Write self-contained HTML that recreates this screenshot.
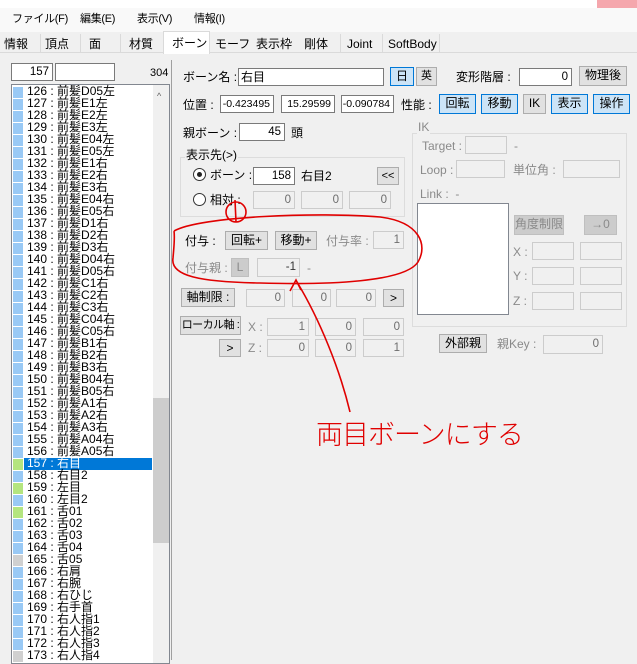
<!DOCTYPE html>
<html><head><meta charset="utf-8"><style>
*{margin:0;padding:0;box-sizing:border-box}
body{width:637px;height:659px;overflow:hidden;background:#f0f0f0;position:relative;font-family:"Liberation Sans","Noto Sans CJK JP",sans-serif;font-size:12px;color:#000}
.a{position:absolute;white-space:nowrap;line-height:14px}
.in{position:absolute;background:#fff;border:1px solid #7a7a7a;text-align:right;padding-right:3px;line-height:16px;font-size:11.5px;white-space:nowrap;overflow:hidden}
.dis{background:#f0f0f0;border-color:#ccc;color:#6d6d6d}
.bt{position:absolute;background:#e1e1e1;border:1px solid #adadad;text-align:center;line-height:17px;white-space:nowrap;overflow:hidden}
.bl{background:#cce4f7;border-color:#0078d7}
.bd{background:#ccc;border-color:#bfbfbf;color:#8a8a8a}
.g{color:#8a8a8a}
.m{font-size:11px;letter-spacing:-0.3px}
.row{position:absolute;left:13px;height:12px;line-height:12px;font-size:12px;width:140px}
.sw{position:absolute;left:0;top:1px;width:10px;height:11px;background:#99c9f5}
.tx{position:absolute;left:14px;top:-1px;white-space:nowrap}
</style></head><body>
<div style="position:absolute;left:0;top:0;width:637px;height:8px;background:#fff"></div>
<div style="position:absolute;left:597px;top:0;width:40px;height:8px;background:#f5a7ad"></div>
<div style="position:absolute;left:0;top:8px;width:637px;height:24px;background:#f9f9f9"></div>
<div class="a m" style="left:12px;top:12px">ファイル(F)</div>
<div class="a m" style="left:80px;top:12px">編集(E)</div>
<div class="a m" style="left:137px;top:12px">表示(V)</div>
<div class="a m" style="left:194px;top:12px">情報(I)</div>
<div style="position:absolute;left:0;top:33px;width:637px;height:20px;background:#f0f0f0;border-bottom:1px solid #dadada"></div>
<div style="position:absolute;left:163px;top:31px;width:47px;height:23px;background:#fff;border:1px solid #dadada;border-bottom:none"></div>
<div class="a" style="left:4px;top:37px">情報</div><div class="a" style="left:45px;top:37px">頂点</div><div class="a" style="left:89px;top:37px">面</div><div class="a" style="left:129px;top:37px">材質</div><div class="a" style="left:172px;top:36px">ボーン</div><div class="a" style="left:215px;top:37px">モーフ</div><div class="a" style="left:256px;top:37px">表示枠</div><div class="a" style="left:304px;top:37px">剛体</div><div class="a" style="left:347px;top:37px">Joint</div><div class="a" style="left:388px;top:37px">SoftBody</div>
<div style="position:absolute;left:40px;top:34px;height:19px;border-left:1px solid #dadada"></div>
<div style="position:absolute;left:80px;top:34px;height:19px;border-left:1px solid #dadada"></div>
<div style="position:absolute;left:120px;top:34px;height:19px;border-left:1px solid #dadada"></div>
<div style="position:absolute;left:340px;top:34px;height:19px;border-left:1px solid #dadada"></div>
<div style="position:absolute;left:382px;top:34px;height:19px;border-left:1px solid #dadada"></div>
<div style="position:absolute;left:439px;top:34px;height:19px;border-left:1px solid #dadada"></div>
<div style="position:absolute;left:171px;top:60px;height:600px;border-left:1px solid #a0a0a0"></div>

<div class="in" style="left:11px;top:63px;width:42px;height:18px">157</div>
<div class="in" style="left:55px;top:63px;width:60px;height:18px"></div>
<div class="a" style="left:150px;top:66px;font-size:11px">304</div>
<div style="position:absolute;left:11px;top:84px;width:159px;height:580px;background:#fff;border:1px solid #828790;overflow:hidden">
<div style="position:absolute;left:141px;top:0;width:17px;height:580px;background:#f0f0f0"></div>
<div style="position:absolute;left:141px;top:313px;width:17px;height:145px;background:#cdcdcd"></div>
<div style="position:absolute;left:145px;top:6px;font-size:9px;color:#606060">^</div>
</div>
<div id="rows"></div>

<div class="a" style="left:183px;top:70px">ボーン名 :</div>
<div class="in" style="left:238px;top:68px;width:146px;height:18px;text-align:left;padding-left:2px;font-size:12px">右目</div>
<div class="bt bl" style="left:390px;top:67px;width:24px;height:19px">日</div>
<div class="bt" style="left:416px;top:67px;width:21px;height:19px;font-size:11px">英</div>
<div class="a" style="left:456px;top:70px">変形階層 :</div>
<div class="in" style="left:519px;top:68px;width:53px;height:18px">0</div>
<div class="bt" style="left:579px;top:66px;width:48px;height:20px">物理後</div>

<div class="a" style="left:183px;top:98px">位置 :</div>
<div class="in" style="left:220px;top:95px;width:54px;height:18px;font-size:10.5px">-0.423495</div>
<div class="in" style="left:281px;top:95px;width:54px;height:18px;font-size:10.5px">15.29599</div>
<div class="in" style="left:341px;top:95px;width:53px;height:18px;font-size:10.5px">-0.090784</div>
<div class="a" style="left:401px;top:98px">性能 :</div>
<div class="bt bl" style="left:439px;top:94px;width:37px;height:20px">回転</div>
<div class="bt bl" style="left:481px;top:94px;width:37px;height:20px">移動</div>
<div class="bt" style="left:523px;top:94px;width:23px;height:20px">IK</div>
<div class="bt bl" style="left:551px;top:94px;width:37px;height:20px">表示</div>
<div class="bt bl" style="left:593px;top:94px;width:37px;height:20px">操作</div>

<div class="a" style="left:183px;top:126px">親ボーン :</div>
<div class="in" style="left:239px;top:123px;width:46px;height:18px">45</div>
<div class="a" style="left:291px;top:126px">頭</div>

<div style="position:absolute;left:180px;top:157px;width:225px;height:60px;border:1px solid #dcdcdc"></div>
<div class="a" style="left:185px;top:148px;background:#f0f0f0;padding:0 1px">表示先(&gt;)</div>
<div style="position:absolute;left:193px;top:168px;width:13px;height:13px;border:1px solid #333;border-radius:50%;background:#fff"><div style="position:absolute;left:3px;top:3px;width:5px;height:5px;border-radius:50%;background:#222"></div></div>
<div class="a" style="left:210px;top:168px">ボーン :</div>
<div class="in" style="left:253px;top:167px;width:42px;height:18px">158</div>
<div class="a" style="left:301px;top:169px">右目2</div>
<div class="bt" style="left:377px;top:167px;width:22px;height:18px;font-size:11px">&lt;&lt;</div>
<div style="position:absolute;left:193px;top:193px;width:13px;height:13px;border:1px solid #333;border-radius:50%;background:#fff"></div>
<div class="a" style="left:210px;top:193px">相対 :</div>
<div class="in dis" style="left:253px;top:191px;width:42px;height:18px">0</div>
<div class="in dis" style="left:301px;top:191px;width:42px;height:18px">0</div>
<div class="in dis" style="left:349px;top:191px;width:42px;height:18px">0</div>

<div style="position:absolute;left:412px;top:133px;width:215px;height:194px;border:1px solid #dcdcdc"></div>
<div class="a g" style="left:417px;top:120px;background:#f0f0f0;padding:0 1px">IK</div>
<div class="a g" style="left:422px;top:139px">Target :</div>
<div class="in dis" style="left:465px;top:136px;width:42px;height:18px"></div>
<div class="a g" style="left:514px;top:139px">-</div>
<div class="a g" style="left:420px;top:163px">Loop :</div>
<div class="in dis" style="left:456px;top:160px;width:49px;height:18px"></div>
<div class="a g" style="left:513px;top:163px">単位角 :</div>
<div class="in dis" style="left:563px;top:160px;width:57px;height:18px"></div>
<div class="a g" style="left:420px;top:187px">Link :&nbsp; -</div>
<div style="position:absolute;left:417px;top:203px;width:92px;height:112px;background:#fff;border:1px solid #828790"></div>
<div class="bt bd" style="left:514px;top:215px;width:50px;height:20px">角度制限</div>
<div class="bt bd" style="left:584px;top:215px;width:33px;height:20px">→0</div>
<div class="a g" style="left:513px;top:245px">X :</div><div class="in dis" style="left:532px;top:242px;width:42px;height:18px"></div><div class="in dis" style="left:580px;top:242px;width:42px;height:18px"></div>
<div class="a g" style="left:513px;top:269px">Y :</div><div class="in dis" style="left:532px;top:267px;width:42px;height:18px"></div><div class="in dis" style="left:580px;top:267px;width:42px;height:18px"></div>
<div class="a g" style="left:513px;top:294px">Z :</div><div class="in dis" style="left:532px;top:292px;width:42px;height:18px"></div><div class="in dis" style="left:580px;top:292px;width:42px;height:18px"></div>

<div class="a" style="left:185px;top:234px">付与 :</div>
<div class="bt" style="left:225px;top:231px;width:43px;height:19px">回転+</div>
<div class="bt" style="left:275px;top:231px;width:42px;height:19px">移動+</div>
<div class="a g" style="left:326px;top:234px">付与率 :</div>
<div class="in dis" style="left:373px;top:231px;width:31px;height:18px">1</div>
<div class="a g" style="left:185px;top:261px">付与親 :</div>
<div class="bt bd" style="left:231px;top:258px;width:18px;height:19px">L</div>
<div class="in dis" style="left:257px;top:258px;width:43px;height:19px;color:#333">-1</div>
<div class="a g" style="left:307px;top:261px">-</div>

<div class="bt" style="left:181px;top:288px;width:54px;height:19px">軸制限 :</div>
<div class="in dis" style="left:246px;top:289px;width:39px;height:18px">0</div>
<div class="in dis" style="left:292px;top:289px;width:39px;height:18px">0</div>
<div class="in dis" style="left:336px;top:289px;width:40px;height:18px">0</div>
<div class="bt" style="left:383px;top:289px;width:21px;height:18px">&gt;</div>
<div class="bt" style="left:180px;top:316px;width:61px;height:19px;font-size:11px;letter-spacing:-0.5px">ローカル軸 :</div>
<div class="a g" style="left:248px;top:320px">X :</div>
<div class="in dis" style="left:267px;top:318px;width:42px;height:18px">1</div>
<div class="in dis" style="left:315px;top:318px;width:41px;height:18px">0</div>
<div class="in dis" style="left:363px;top:318px;width:41px;height:18px">0</div>
<div class="bt" style="left:219px;top:339px;width:22px;height:18px">&gt;</div>
<div class="a g" style="left:248px;top:341px">Z :</div>
<div class="in dis" style="left:267px;top:339px;width:42px;height:18px">0</div>
<div class="in dis" style="left:315px;top:339px;width:41px;height:18px">0</div>
<div class="in dis" style="left:363px;top:339px;width:41px;height:18px">1</div>
<div class="bt" style="left:439px;top:334px;width:48px;height:19px">外部親</div>
<div class="a g" style="left:497px;top:337px">親Key :</div>
<div class="in dis" style="left:543px;top:335px;width:60px;height:19px">0</div>

<svg style="position:absolute;left:0;top:0" width="637" height="659">
<g fill="none" stroke="#e00000" stroke-width="1.6">
<path d="M174,231 C200,216 320,212 380,217 C420,222 428,245 418,262 C405,282 330,285 260,283 C200,282 170,276 173,258 C174,246 175,238 174,231"/>
<circle cx="236" cy="212" r="10"/>
<path d="M235,200 L236,222"/>
<path d="M350,412 C340,370 320,320 297,282"/>
<path d="M290,291 L296,280 L301,290"/>
</g>
</svg>
<div class="a" style="left:316px;top:418px;color:#e00000;font-size:27px;line-height:34px;letter-spacing:-1px;font-weight:300">両目ボーンにする</div>

<script>
var d=document.getElementById('rows'),n=['前髪D05左','前髪E1左','前髪E2左','前髪E3左','前髪E04左','前髪E05左','前髪E1右','前髪E2右','前髪E3右','前髪E04右','前髪E05右','前髪D1右','前髪D2右','前髪D3右','前髪D04右','前髪D05右','前髪C1右','前髪C2右','前髪C3右','前髪C04右','前髪C05右','前髪B1右','前髪B2右','前髪B3右','前髪B04右','前髪B05右','前髪A1右','前髪A2右','前髪A3右','前髪A04右','前髪A05右','右目','右目2','左目','左目2','舌01','舌02','舌03','舌04','舌05','右肩','右腕','右ひじ','右手首','右人指1','右人指2','右人指3','右人指4'],h='';
for(var i=0;i<n.length;i++){var id=126+i,y=86+i*12,c='#99c9f5';if(id==157||id==159||id==161)c='#b4e57f';if(id==165||id==173)c='#d0d0d0';var sel=id==157;
h+='<div class="row" style="top:'+y+'px"><div class="sw" style="background:'+c+'"></div>'+(sel?'<div style="position:absolute;left:11px;top:0;width:128px;height:12px;background:#0078d7"></div>':'')+'<div class="tx" style="color:'+(sel?'#fff':'#000')+'">'+id+' : '+n[i]+'</div></div>';}
d.innerHTML=h;
</script>
</body></html>
